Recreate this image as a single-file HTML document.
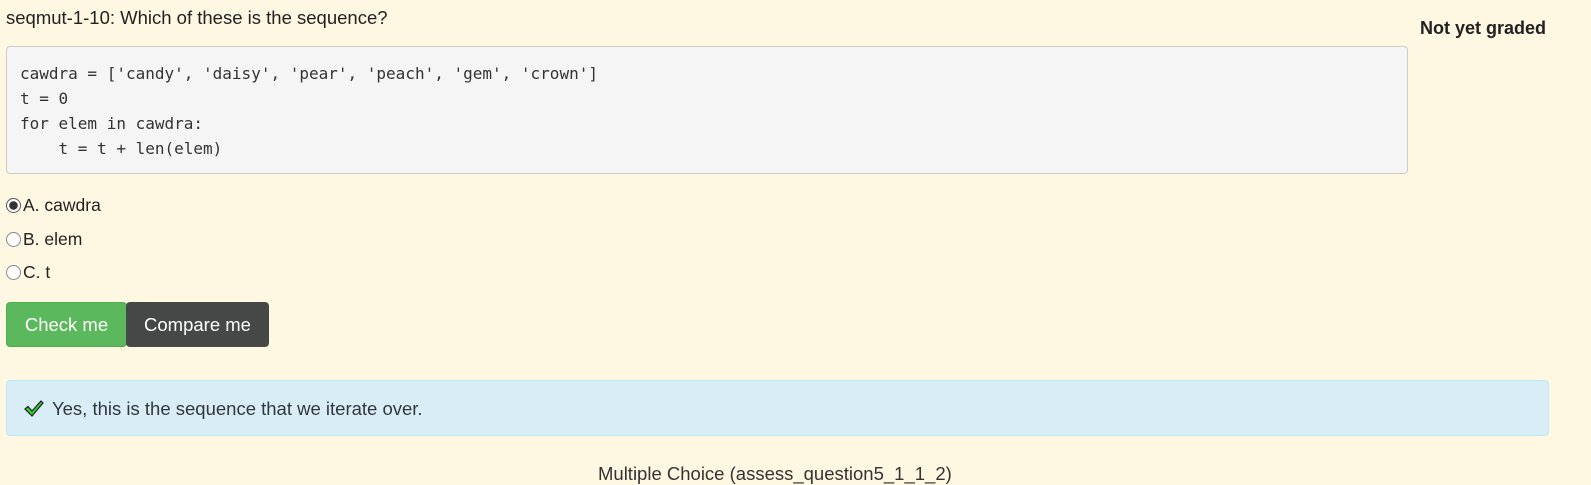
<!DOCTYPE html>
<html><head><style>
body{margin:0;width:1591px;height:482px;overflow:hidden;background:#fef8e2;font-family:"Liberation Sans",sans-serif;color:#222;position:relative}
.a{position:absolute}
pre{margin:0;font-family:"DejaVu Sans Mono","Liberation Mono",monospace;font-size:16px;line-height:25px;color:#333}
.opt{font-size:17.5px;display:flex;align-items:center}
.r{width:15px;height:15px;border-radius:50%;border:1px solid #888;background:#fff;box-sizing:border-box;margin-right:2px}
.btn{color:#fff;font-size:18.5px;border-radius:4px;display:flex;align-items:center;justify-content:center}
</style></head><body>
<div class="a" style="left:6px;top:7px;font-size:18.5px">seqmut-1-10: Which of these is the sequence?</div>
<div class="a" style="left:1420px;top:18px;font-size:18px;font-weight:bold">Not yet graded</div>
<div class="a" style="left:6px;top:46px;width:1400px;height:126px;background:#f5f5f5;border:1px solid #ccc;border-radius:4px"></div>
<pre class="a" style="left:20px;top:61px">cawdra = ['candy', 'daisy', 'pear', 'peach', 'gem', 'crown']
t = 0
for elem in cawdra:
    t = t + len(elem)</pre>
<div class="a opt" style="left:6px;top:195px"><span class="r" style="border:1px solid #555;background:radial-gradient(circle,#333 0 4px,#fff 4.5px)"></span>A. cawdra</div>
<div class="a opt" style="left:6px;top:229px"><span class="r"></span>B. elem</div>
<div class="a opt" style="left:6px;top:262px"><span class="r"></span>C. t</div>
<div class="a btn" style="left:6px;top:302px;width:121px;height:45px;background:#5cb85c;border:1px solid #4cae4c;box-sizing:border-box">Check me</div>
<div class="a btn" style="left:126px;top:302px;width:143px;height:45px;background:#464747">Compare me</div>
<div class="a" style="left:6px;top:380px;width:1543px;height:56px;background:#d9edf7;border:1px solid #bce8f1;border-radius:4px;box-sizing:border-box"></div>
<svg class="a" style="left:24px;top:400px" width="20" height="18" viewBox="0 0 20 18"><path d="M1 9 L4 6.5 L8 11 L17 1 L19 3 L8 16 Z" fill="#3c3" stroke="#222" stroke-width="1.2"/></svg>
<div class="a" style="left:52px;top:398px;font-size:18.5px;color:#31373b">Yes, this is the sequence that we iterate over.</div>
<div class="a" style="left:598px;top:463px;font-size:18.5px;color:#333">Multiple Choice (assess_question5_1_1_2)</div>
</body></html>
